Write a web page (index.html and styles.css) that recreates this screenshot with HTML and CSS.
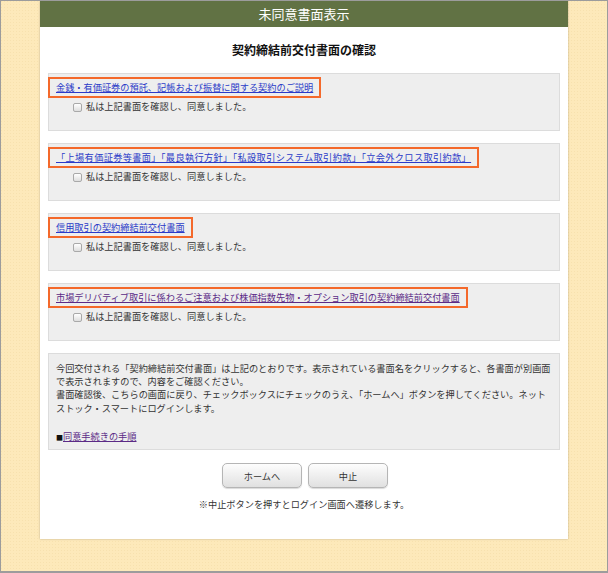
FILE: index.html
```html
<!DOCTYPE html>
<html lang="ja">
<head>
<meta charset="utf-8">
<title>未同意書面表示</title>
<link rel="stylesheet" href="styles.css">
</head>
<body>
<div class="panel">
  <div class="header">未同意書面表示</div>
  <h1 class="title">契約締結前交付書面の確認</h1>

  <div class="doc">
    <div class="mark"><a class="link" href="#">金銭・有価証券の預託、記帳および振替に関する契約のご説明</a></div>
    <label class="agree"><input type="checkbox" class="check">私は上記書面を確認し、同意しました。</label>
  </div>

  <div class="doc">
    <div class="mark"><a class="link wide" href="#">「上場有価証券等書面」「最良執行方針」「私設取引システム取引約款」「立会外クロス取引約款」</a></div>
    <label class="agree"><input type="checkbox" class="check">私は上記書面を確認し、同意しました。</label>
  </div>

  <div class="doc">
    <div class="mark"><a class="link" href="#">信用取引の契約締結前交付書面</a></div>
    <label class="agree"><input type="checkbox" class="check">私は上記書面を確認し、同意しました。</label>
  </div>

  <div class="doc">
    <div class="mark"><a class="link visited" href="#">市場デリバティブ取引に係わるご注意および株価指数先物・オプション取引の契約締結前交付書面</a></div>
    <label class="agree"><input type="checkbox" class="check">私は上記書面を確認し、同意しました。</label>
  </div>

  <div class="info">
    <p class="info-text">今回交付される「契約締結前交付書面」は上記のとおりです。表示されている書面名をクリックすると、各書面が別画面<br>で表示されますので、内容をご確認ください。<br>書面確認後、こちらの画面に戻り、チェックボックスにチェックのうえ、「ホームへ」ボタンを押してください。ネット<br>ストック・スマートにログインします。</p>
    <p class="info-link"><span class="square">■</span><a class="link visited" href="#">同意手続きの手順</a></p>
  </div>

  <div class="buttons">
    <button class="btn" type="button">ホームへ</button>
    <button class="btn" type="button">中止</button>
  </div>
  <p class="note">※中止ボタンを押すとログイン画面へ遷移します。</p>
</div>
</body>
</html>
```

FILE: styles.css
```css
html, body {
  margin: 0;
  padding: 0;
}
body {
  width: 608px;
  height: 573px;
  box-sizing: border-box;
  border: 1px solid #9c9c9c;
  border-bottom-width: 2px;
  background-color: #fde9ba;
  background-image: radial-gradient(rgba(230, 200, 140, 0.25) 0.6px, transparent 0.8px);
  background-size: 3px 3px;
  font-family: "Noto Sans CJK JP", "Noto Sans", sans-serif;
  font-feature-settings: "pkna";
  color: #333;
  overflow: hidden;
}
.panel {
  margin-left: 39px;
  width: 528px;
  background: #fff;
  box-shadow: 0 0 2px rgba(0, 0, 0, 0.25);
  padding-bottom: 28px;
}
.header {
  height: 26px;
  line-height: 26px;
  background: #617244;
  color: #fff;
  font-size: 13px;
  text-align: center;
}
.title {
  margin: 0;
  padding-top: 15px;
  height: 31px;
  box-sizing: border-box;
  margin-bottom: 15px;
  font-size: 12px;
  line-height: 16px;
  font-weight: bold;
  text-align: center;
  color: #111;
}
.doc {
  display: flex;
  flex-direction: column;
  align-items: flex-start;
  margin: 0 8px 12px;
  height: 58px;
  box-sizing: border-box;
  border: 1px solid #dcdcdc;
  background: #eeeeee;
  padding-top: 3px;
  font-size: 9.2px;
}
.mark {
  margin-left: -1px;
  border: 2px solid #f4692b;
  padding: 2px 6px;
  font-size: 9.2px;
  line-height: 13.4px;
  white-space: nowrap;
}
.link {
  color: #2b3bc8;
  text-decoration: underline;
}
.link.wide {
  letter-spacing: 0.35px;
}
.link.visited {
  color: #5b2a86;
}
.agree {
  display: flex;
  align-items: center;
  margin: 2px 0 0 24px;
  font-size: 9.2px;
  line-height: 13.4px;
  color: #333;
}
.check {
  appearance: none;
  -webkit-appearance: none;
  width: 9px;
  height: 9px;
  margin: 0 4px 0 0;
  border: 1px solid #a9a9a9;
  border-radius: 2px;
  background: linear-gradient(#ffffff, #dedede);
  box-sizing: border-box;
}
.info {
  margin: 0 8px;
  border: 1px solid #dcdcdc;
  background: #eeeeee;
  padding: 7.5px 7px 5px;
  font-size: 9.2px;
  line-height: 13.4px;
}
.info-text {
  margin: 0;
  white-space: nowrap;
}
.info-link {
  margin: 14.5px 0 0;
}
.square {
  font-size: 7px;
  color: #111;
}
.buttons {
  display: flex;
  justify-content: center;
  gap: 6px;
  margin-top: 13px;
  padding-left: 2px;
}
.btn {
  width: 80px;
  height: 25px;
  border: 1px solid #b5b5b5;
  border-radius: 5px;
  background: linear-gradient(#fdfdfd, #ececec 60%, #e0e0e0);
  box-shadow: 0 1px 1px rgba(0, 0, 0, 0.15);
  font-family: "Noto Sans CJK JP", "Noto Sans", sans-serif;
  font-feature-settings: "pkna";
  font-size: 9.2px;
  color: #333;
  padding: 0;
}
.note {
  margin: 10px 0 0;
  font-size: 9.2px;
  line-height: 13.4px;
  text-align: center;
  color: #333;
}
```
